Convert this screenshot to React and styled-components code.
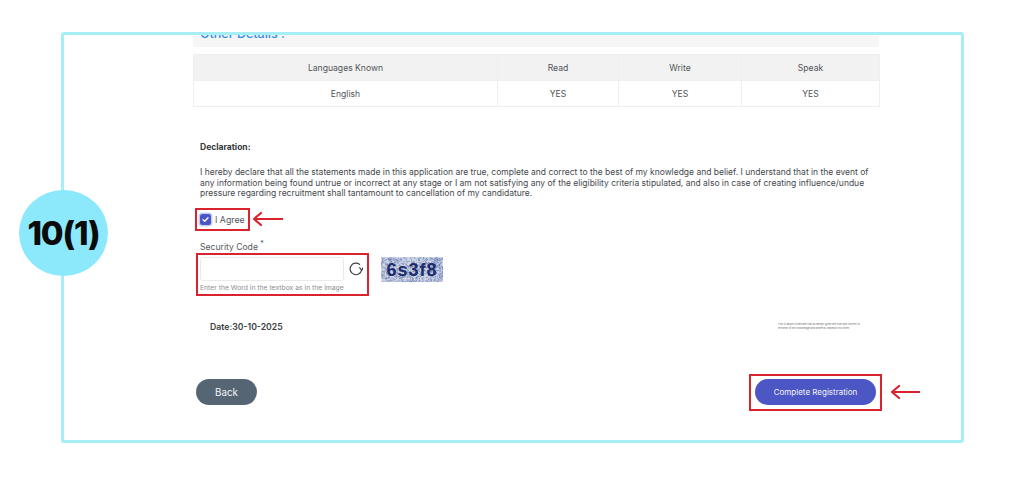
import React, { useMemo } from 'react';
import styled, { createGlobalStyle } from 'styled-components';

const GlobalStyle = createGlobalStyle`
  html, body {
    margin: 0;
    padding: 0;
    background: #fff;
    overflow: hidden;
  }
  body {
    font-family: Inter, "Liberation Sans", sans-serif;
    color: #3f4347;
  }
`;

const Page = styled.div`
  position: relative;
  width: 1024px;
  height: 484px;
  padding: 32px 0 0 61px;
  box-sizing: border-box;
`;

const Badge = styled.div`
  position: absolute;
  left: 19px;
  top: 190px;
  width: 89px;
  height: 86px;
  border-radius: 50%;
  background: #8ce9fb;
  color: #0b0b0b;
  display: flex;
  align-items: center;
  justify-content: center;
  font-size: 33px;
  font-weight: 800;
  letter-spacing: -1.2px;
`;

const Frame = styled.div`
  width: 903px;
  height: 411px;
  box-sizing: border-box;
  border: 3px solid #a6eef5;
  border-radius: 3px;
  padding-left: 129px;
  overflow: hidden;
`;

const Content = styled.div`
  width: 686px;
`;

const SectionStrip = styled.div`
  height: 12px;
  background: #f6f6f6;
  overflow: hidden;
  padding-left: 7px;
`;

const SectionTitle = styled.div`
  margin-top: -9px;
  font-size: 12.5px;
  line-height: 16px;
  font-weight: 500;
  color: #2f8be6;
`;

const LangTable = styled.table`
  width: 686px;
  margin-top: 7px;
  border-collapse: collapse;
  table-layout: fixed;
  font-size: 8.6px;
  color: #505458;
  th, td {
    height: 26px;
    padding: 0;
    font-weight: 400;
    text-align: center;
    border: 1px solid #efefef;
    box-sizing: border-box;
  }
  th {
    background: #f2f2f2;
  }
`;

const Form = styled.div`
  padding-left: 7px;
`;

const DeclarationTitle = styled.div`
  margin-top: 34px;
  font-size: 8.5px;
  line-height: 12px;
  font-weight: 700;
  color: #33373a;
`;

const DeclarationText = styled.p`
  margin: 14px 0 0;
  font-size: 8.5px;
  line-height: 10.5px;
  color: #44484c;
  white-space: nowrap;
`;

const Highlight = styled.div`
  position: relative;
  box-sizing: border-box;
  border: 2px solid #d9232e;
`;

const Pointer = styled.svg`
  position: absolute;
  top: 50%;
  left: calc(100% + ${(p) => p.$gap}px);
  transform: translateY(-50%);
`;

const AgreeBox = styled(Highlight)`
  display: inline-flex;
  align-items: center;
  gap: 4px;
  height: 23px;
  margin: 9px 0 0 -5px;
  padding: 0 3px 0 3px;
`;

const Check = styled.span`
  width: 11px;
  height: 11px;
  border-radius: 2.5px;
  background: #4a55c6;
  box-shadow: 0 0 0 1.5px #c9cff0;
  display: flex;
  align-items: center;
  justify-content: center;
`;

const AgreeLabel = styled.span`
  font-size: 8.8px;
  color: #55595d;
`;

const FieldLabel = styled.div`
  margin-top: 10px;
  font-size: 8.6px;
  line-height: 12px;
  color: #55595d;
  sup {
    font-size: 7px;
    line-height: 0;
  }
`;

const SecurityRow = styled.div`
  display: flex;
  align-items: flex-start;
  margin: 0 0 0 -4px;
`;

const SecurityBox = styled(Highlight)`
  width: 173px;
  height: 43px;
  padding: 2px 0 0 2px;
`;

const InputRow = styled.div`
  display: flex;
  align-items: center;
  gap: 5px;
`;

const CodeInput = styled.input`
  width: 144px;
  height: 24px;
  box-sizing: border-box;
  border: 1px solid #eaeaea;
  border-radius: 3px;
  background: #fff;
  outline: none;
`;

const Hint = styled.div`
  margin-top: 2px;
  font-size: 6.8px;
  line-height: 9px;
  color: #8b8f93;
  white-space: nowrap;
`;

const CaptchaImage = styled.svg`
  display: block;
  margin: 4px 0 0 12px;
`;

const DateRow = styled.div`
  display: flex;
  justify-content: space-between;
  align-items: center;
  margin-top: 21px;
  padding-left: 17px;
`;

const DateText = styled.div`
  font-size: 8.7px;
  line-height: 20px;
  font-weight: 600;
  color: #3a3e42;
`;

const FinePrint = styled.div`
  width: 82px;
  margin-right: 19px;
  font-size: 2.6px;
  line-height: 3.4px;
  color: #66696c;
`;

const Actions = styled.div`
  display: flex;
  justify-content: space-between;
  align-items: center;
  margin: 37px -3px 0 3px;
`;

const PillButton = styled.button`
  height: 26px;
  width: ${(p) => p.$width}px;
  border: 0;
  border-radius: 13px;
  background: ${(p) => p.$color};
  color: #f4f5fb;
  font-family: inherit;
  font-size: ${(p) => p.$size}px;
  padding: 0;
`;

const SubmitBox = styled(Highlight)`
  width: 133px;
  height: 37px;
  display: flex;
  align-items: center;
  justify-content: center;
`;

const Arrow = ({ gap, width }) => (
  <Pointer $gap={gap} width={width} height="16" viewBox={`0 0 ${width} 16`} fill="none">
    <path
      d={`M${width} 8H2M9 2L2 8L9 14`}
      stroke="#d9232e"
      strokeWidth="2.2"
      strokeLinecap="round"
      strokeLinejoin="round"
    />
  </Pointer>
);

const Captcha = () => {
  // fixed seed so that the noise is the same on each load
  const dots = useMemo(() => {
    let seed = 17;
    const next = () => {
      seed = (seed * 16807) % 2147483647;
      return seed / 2147483647;
    };
    return Array.from({ length: 900 }, () => ({
      x: next() * 62,
      y: next() * 25,
      o: 0.3 + next() * 0.6,
    }));
  }, []);

  return (
    <CaptchaImage width="62" height="25" viewBox="0 0 62 25">
      <rect width="62" height="25" fill="#cfd6e6" />
      {dots.map((d, i) => (
        <rect key={i} x={d.x} y={d.y} width="1" height="1" fill="#6277ad" opacity={d.o} />
      ))}
      <text
        x="31"
        y="19"
        textAnchor="middle"
        fontFamily="Liberation Sans, sans-serif"
        fontWeight="700"
        fontSize="18"
        letterSpacing="1"
        fill="#1b2b6b"
      >
        6s3f8
      </text>
    </CaptchaImage>
  );
};

export default function App() {
  return (
    <Page>
      <GlobalStyle />
      <Badge>10(1)</Badge>
      <Frame>
        <Content>
          <SectionStrip>
            <SectionTitle>Other Details :</SectionTitle>
          </SectionStrip>
          <LangTable>
            <colgroup>
              <col width="304" />
              <col width="121" />
              <col width="123" />
              <col width="138" />
            </colgroup>
            <thead>
              <tr>
                <th>Languages Known</th>
                <th>Read</th>
                <th>Write</th>
                <th>Speak</th>
              </tr>
            </thead>
            <tbody>
              <tr>
                <td>English</td>
                <td>YES</td>
                <td>YES</td>
                <td>YES</td>
              </tr>
            </tbody>
          </LangTable>
          <Form>
            <DeclarationTitle>Declaration:</DeclarationTitle>
            <DeclarationText>
              I hereby declare that all the statements made in this application are true, complete and correct to the best of my knowledge and belief. I understand that in the event of
              <br />
              any information being found untrue or incorrect at any stage or I am not satisfying any of the eligibility criteria stipulated, and also in case of creating influence/undue
              <br />
              pressure regarding recruitment shall tantamount to cancellation of my candidature.
            </DeclarationText>
            <AgreeBox>
              <Check>
                <svg width="7" height="7" viewBox="0 0 7 7" fill="none">
                  <path d="M1 3.7L2.8 5.3L6 1.8" stroke="#fff" strokeWidth="1.3" strokeLinecap="round" strokeLinejoin="round" />
                </svg>
              </Check>
              <AgreeLabel>I Agree</AgreeLabel>
              <Arrow gap={4} width={31} />
            </AgreeBox>
            <FieldLabel>
              Security Code <sup>*</sup>
            </FieldLabel>
            <SecurityRow>
              <SecurityBox>
                <InputRow>
                  <CodeInput type="text" />
                  <svg width="14" height="14" viewBox="0 0 14 14" fill="none">
                    <path d="M12.6 8.2A5.8 5.8 0 1 1 10.6 2.4" stroke="#3b3f43" strokeWidth="1.2" strokeLinecap="round" />
                    <path d="M10.6 5.6L12.8 8.4L13.8 5.9" stroke="#3b3f43" strokeWidth="1.1" strokeLinecap="round" strokeLinejoin="round" />
                  </svg>
                </InputRow>
                <Hint>Enter the Word in the textbox as in the image</Hint>
              </SecurityBox>
              <Captcha />
            </SecurityRow>
          </Form>
          <DateRow>
            <DateText>Date:30-10-2025</DateText>
            <FinePrint>
              This is about to declare that all details given are true and correct to the best of my knowledge and belief as stated in this form
            </FinePrint>
          </DateRow>
          <Actions>
            <PillButton $width={61} $color="#566573" $size={9.8}>Back</PillButton>
            <SubmitBox>
              <PillButton $width={121} $color="#4c56c4" $size={8}>Complete Registration</PillButton>
              <Arrow gap={10} width={30} />
            </SubmitBox>
          </Actions>
        </Content>
      </Frame>
    </Page>
  );
}
